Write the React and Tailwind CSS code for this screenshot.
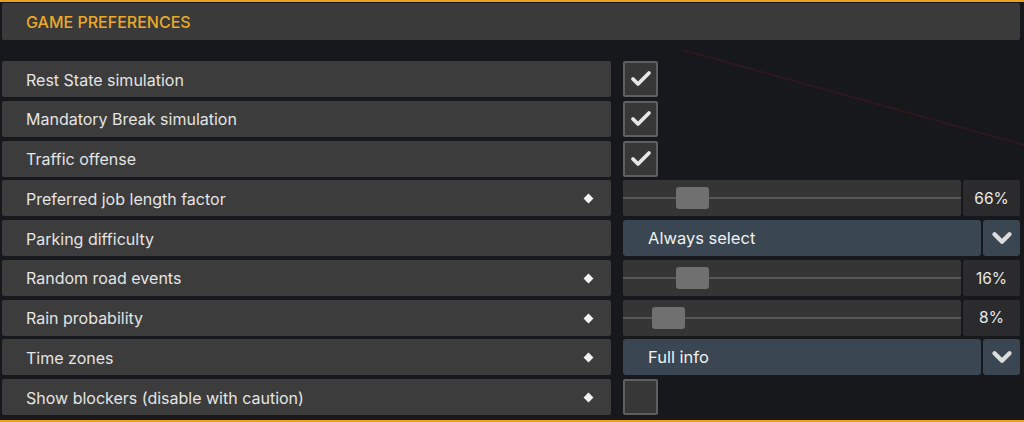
import { Check, ChevronDown } from 'lucide-react'

const rows = [
  { label: 'Rest State simulation', type: 'check', checked: true },
  { label: 'Mandatory Break simulation', type: 'check', checked: true },
  { label: 'Traffic offense', type: 'check', checked: true },
  { label: 'Preferred job length factor', type: 'slider', thumb: 53, value: '66%', mark: true },
  { label: 'Parking difficulty', type: 'select', value: 'Always select' },
  { label: 'Random road events', type: 'slider', thumb: 53, value: '16%', mark: true },
  { label: 'Rain probability', type: 'slider', thumb: 29, value: '8%', mark: true },
  { label: 'Time zones', type: 'select', value: 'Full info', mark: true },
  { label: 'Show blockers (disable with caution)', type: 'check', checked: false, mark: true },
]

function Control({ row }) {
  if (row.type === 'check') {
    return (
      <div className="w-[35px] h-[36px] rounded-[2px] border-2 border-[#5f5f5f] bg-[#373737] flex items-center justify-center">
        {row.checked && <Check size={24} strokeWidth={3.75} className="text-[#e6e6e6]" />}
      </div>
    )
  }
  if (row.type === 'slider') {
    return (
      <div className="flex-1 flex gap-[2px] h-full">
        <div className="flex-1 relative rounded-[2px] bg-[#353535]">
          <div className="absolute left-0 right-0 top-[17px] h-[2px] bg-[#575757]" />
          <div
            className="absolute top-[7px] w-[33px] h-[22px] rounded-[3px] bg-[#707070]"
            style={{ left: row.thumb }}
          />
        </div>
        <div className="w-[57px] rounded-[2px] bg-[#2b2b2d] flex items-center justify-center pt-[1px] text-[15.5px] text-[#e8e8e8]">
          {row.value}
        </div>
      </div>
    )
  }
  return (
    <div className="flex-1 flex gap-[2px] h-full">
      <div className="flex-1 rounded-[3px] bg-[#3a4651] flex items-center pl-[25px] pt-[1px] text-[16.5px] text-[#f0f0f0]">
        {row.value}
      </div>
      <div className="w-[37px] rounded-[3px] bg-[#3a4651] flex items-center justify-center">
        <ChevronDown size={30} strokeWidth={3.5} className="text-[#dcdcdc]" />
      </div>
    </div>
  )
}

export default function App() {
  return (
    <div
      className="relative w-[1024px] h-[422px] overflow-hidden bg-[#17181b] border-t-2 border-b-2 border-[#e9a21f]"
      style={{ fontFamily: 'Inter, "Noto Sans", sans-serif' }}
    >
      <svg className="absolute inset-0 pointer-events-none" width="1024" height="422">
        <line x1="683" y1="48" x2="1024" y2="143" stroke="#2f181b" strokeWidth="2" />
      </svg>

      <div className="relative flex flex-col pl-[2px] pr-[4px] pt-[1px]">
        <div className="h-[37px] rounded-[2px] bg-[#3a3a3a] flex items-center pl-[24px] pt-[1px] text-[16px] font-medium text-[#eba929]">
          GAME PREFERENCES
        </div>

        <div className="mt-[21px] flex flex-col gap-[3.75px]">
          {rows.map((row) => (
            <div key={row.label} className="h-[36px] flex items-center gap-[12px]">
              <div className="w-[609px] h-full rounded-[2px] bg-[#3c3c3c] flex items-center pl-[24px] pr-[19px] pt-[1px] text-[16px] text-[#e4e4e4]">
                <span className="flex-1">{row.label}</span>
                {row.mark && <span className="w-[7px] h-[7px] rotate-45 bg-[#f2f2f2]" />}
              </div>
              <Control row={row} />
            </div>
          ))}
        </div>
      </div>
    </div>
  )
}
